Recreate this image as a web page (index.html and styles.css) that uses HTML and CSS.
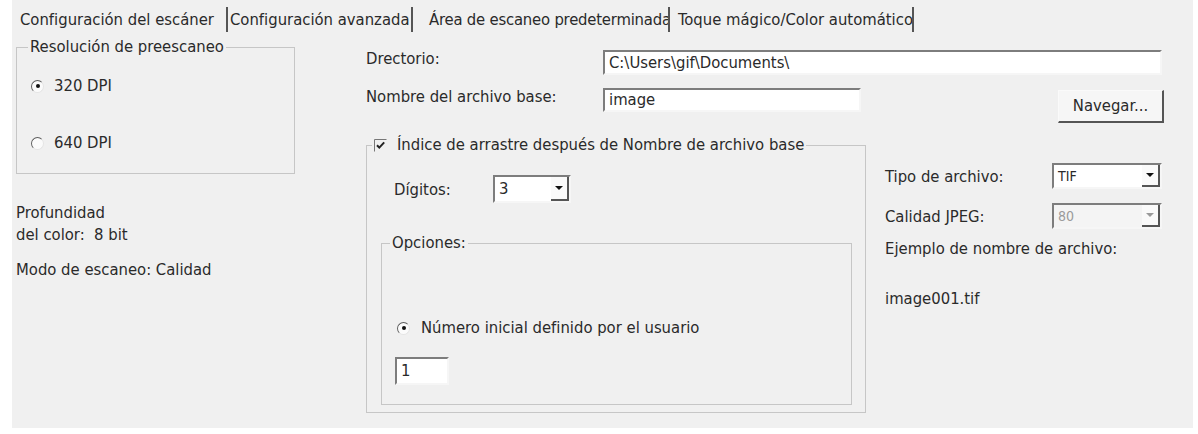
FILE: index.html
```html
<!DOCTYPE html>
<html lang="es">
<head>
<meta charset="utf-8">
<title>Configuración del escáner</title>
<link rel="stylesheet" href="styles.css">
</head>
<body>
<div class="panel">
  <div class="tabs">
    <div class="tab tab-1">Configuración del escáner</div>
    <div class="tab tab-2">Configuración avanzada</div>
    <div class="tab tab-3">Área de escaneo predeterminada</div>
    <div class="tab tab-4">Toque mágico/Color automático</div>
  </div>
  <div class="content">
    <div class="left">
      <fieldset class="group group-res">
        <legend>Resolución de preescaneo</legend>
        <div class="opt opt-first"><span class="radio on"></span>320 DPI</div>
        <div class="opt opt-second"><span class="radio"></span>640 DPI</div>
      </fieldset>
      <div class="info info-depth">Profundidad<br>del color:&nbsp; 8 bit</div>
      <div class="info info-mode">Modo de escaneo: Calidad</div>
    </div>
    <div class="main">
      <div class="row row-dir">
        <span class="lbl">Drectorio:</span>
        <div class="field field-dir">C:\Users\gif\Documents\</div>
      </div>
      <div class="row row-name">
        <span class="lbl">Nombre del archivo base:</span>
        <div class="field field-name">image</div>
        <div class="btn">Navegar...</div>
      </div>
      <div class="lower">
        <fieldset class="group group-index">
          <legend><span class="check"><svg width="13" height="13" viewBox="0 0 13 13"><path d="M0.5 12.5V0.5H12.5" fill="none" stroke="#777" stroke-width="1"/><path d="M3 6.2L5.3 8.6L10.2 3.4" fill="none" stroke="#222" stroke-width="2"/></svg></span>Índice de arrastre después de Nombre de archivo base</legend>
          <div class="digits">
            <span class="lbl-digits">Dígitos:</span>
            <div class="combo combo-digits"><span class="combo-val">3</span><span class="combo-btn"><span class="tri"></span></span></div>
          </div>
          <fieldset class="group group-opts">
            <legend>Opciones:</legend>
            <div class="opt opt-user"><span class="radio on"></span>Número inicial definido por el usuario</div>
            <div class="field field-start">1</div>
          </fieldset>
        </fieldset>
        <div class="right">
          <div class="rrow rrow-type">
            <span class="rlbl">Tipo de archivo:</span>
            <div class="combo combo-type"><span class="combo-val">TIF</span><span class="combo-btn"><span class="tri"></span></span></div>
          </div>
          <div class="rrow rrow-jpeg">
            <span class="rlbl">Calidad JPEG:</span>
            <div class="combo combo-jpeg disabled"><span class="combo-val">80</span><span class="combo-btn"><span class="tri"></span></span></div>
          </div>
          <div class="example-lbl">Ejemplo de nombre de archivo:</div>
          <div class="example-val">image001.tif</div>
        </div>
      </div>
    </div>
  </div>
</div>
</body>
</html>
```
FILE: styles.css
```css
html, body {
  margin: 0;
  padding: 0;
  background: #ffffff;
}

.panel {
  margin-left: 12px;
  width: 1181px;
  height: 428px;
  background: #f0f0f0;
  font-family: "DejaVu Sans Condensed", "DejaVu Sans", sans-serif;
  font-size: 16.5px;
  color: #2a2a2a;
  box-sizing: border-box;
  overflow: hidden;
}

/* tabs */
.tabs {
  display: flex;
  padding-top: 7px;
  padding-left: 8px;
  height: 32px;
  box-sizing: border-box;
  font-size: 16.5px;
}
.tab {
  height: 25px;
  line-height: 25px;
  border-right: 2px solid #555;
  white-space: nowrap;
  box-sizing: border-box;
  overflow: hidden;
}
.tab-1 { width: 208px; }
.tab-2 { width: 185px; padding-left: 2px; }
.tab-3 { width: 257px; padding-left: 16px; letter-spacing: -0.2px; }
.tab-4 { width: 244px; padding-left: 8px; }

.content {
  display: flex;
}

/* group boxes */
.group {
  margin: 0;
  padding: 0;
  border: 1px solid #c6c6c6;
  min-width: 0;
  box-sizing: border-box;
}
.group legend {
  padding: 0 2px;
  line-height: 20px;
  white-space: nowrap;
}

/* left column */
.left {
  width: 354px;
  padding-left: 4px;
  box-sizing: border-box;
}
.group-res {
  margin-top: 5px;
  width: 279px;
  padding: 0 0 20px 14px;
}
.group-res legend {
  margin-left: -3px;
}
.opt {
  display: flex;
  align-items: center;
  height: 20px;
  line-height: 20px;
  white-space: nowrap;
}
.opt-first { margin-top: 19px; }
.opt-second { margin-top: 37px; }
.group-res .radio { margin-right: 10px; }

.radio {
  display: inline-flex;
  align-items: center;
  justify-content: center;
  width: 13px;
  height: 13px;
  border-radius: 50%;
  border: 1.5px solid;
  border-color: #5e5e5e #e4e4e4 #e4e4e4 #5e5e5e;
  background: #fbfbfb;
  box-sizing: border-box;
  flex: none;
}
.radio.on::after {
  content: "";
  width: 4px;
  height: 4px;
  border-radius: 50%;
  background: #111;
}

.info {
  line-height: 22px;
}
.info-depth { margin-top: 28px; }
.info-mode { margin-top: 13px; }

/* main area */
.main {
  flex: 1;
}
.row {
  display: flex;
  align-items: flex-start;
}
.row-dir { margin-top: 18px; }
.row-name { margin-top: 13px; }
.lbl {
  width: 237px;
  line-height: 17px;
  flex: none;
  white-space: nowrap;
}
.field {
  background: #fff;
  border: 2px solid;
  border-color: #7d7d7d #f6f6f6 #f6f6f6 #7d7d7d;
  box-sizing: border-box;
  padding-left: 4px;
  white-space: nowrap;
  overflow: hidden;
}
.field-dir {
  width: 559px;
  height: 25px;
  line-height: 21px;
}
.field-name {
  width: 258px;
  height: 24px;
  line-height: 20px;
}
.btn {
  margin-left: 197px;
  margin-top: 2px;
  width: 106px;
  height: 33px;
  line-height: 30px;
  text-align: center;
  background: #f6f6f6;
  border: 1px solid;
  border-color: #fafafa #555 #555 #fafafa;
  border-right-width: 2px;
  border-bottom-width: 2px;
  box-sizing: border-box;
  color: #2a2a2a;
}

.lower {
  display: flex;
  align-items: flex-start;
  margin-top: 12px;
}
.group-index {
  width: 500px;
  padding: 0 13px 7px 14px;
}
.group-index > legend {
  margin-left: -9px;
  display: flex;
  align-items: center;
}
.check {
  display: inline-flex;
  width: 13px;
  height: 13px;
  margin-right: 10px;
}
.check svg { display: block; }

.digits {
  display: flex;
  align-items: center;
  margin-top: 20px;
  padding-left: 13px;
}
.lbl-digits {
  width: 99px;
  flex: none;
}

.combo {
  display: flex;
  background: #fff;
  border: 2px solid;
  border-color: #7d7d7d #f6f6f6 #f6f6f6 #7d7d7d;
  box-sizing: border-box;
}
.combo-val {
  flex: 1;
  padding-left: 4px;
}
.combo-btn {
  width: 18px;
  display: flex;
  align-items: center;
  justify-content: center;
  border-right: 2px solid #555;
  border-bottom: 2px solid #555;
  box-sizing: border-box;
  background: #fafafa;
}
.tri {
  width: 0;
  height: 0;
  border-left: 4px solid transparent;
  border-right: 4px solid transparent;
  border-top: 4px solid #111;
}
.combo-digits {
  width: 78px;
  height: 28px;
  line-height: 24px;
}

.group-opts {
  margin-top: 30px;
  padding: 0 0 19px 13px;
}
.group-opts legend {
  margin-left: -5px;
}
.opt-user { margin-top: 65px; margin-left: 2px; }
.opt-user .radio { margin-right: 11px; }
.field-start {
  margin-top: 19px;
  width: 54px;
  height: 28px;
  line-height: 24px;
}

/* right column */
.right {
  margin-left: 19px;
  padding-top: 28px;
  width: 277px;
}
.rrow {
  display: flex;
  align-items: center;
}
.rrow-jpeg { margin-top: 14px; }
.rlbl {
  width: 167px;
  flex: none;
  white-space: nowrap;
}
.combo-type, .combo-jpeg {
  width: 110px;
  height: 26px;
  line-height: 22px;
  font-size: 14px;
}
.combo.disabled {
  background: #f4f4f4;
  color: #9a9a9a;
}
.combo.disabled .tri { border-top-color: #9a9a9a; }
.example-lbl {
  margin-top: 10px;
  line-height: 20px;
  white-space: nowrap;
}
.example-val {
  margin-top: 30px;
  line-height: 20px;
}
```
